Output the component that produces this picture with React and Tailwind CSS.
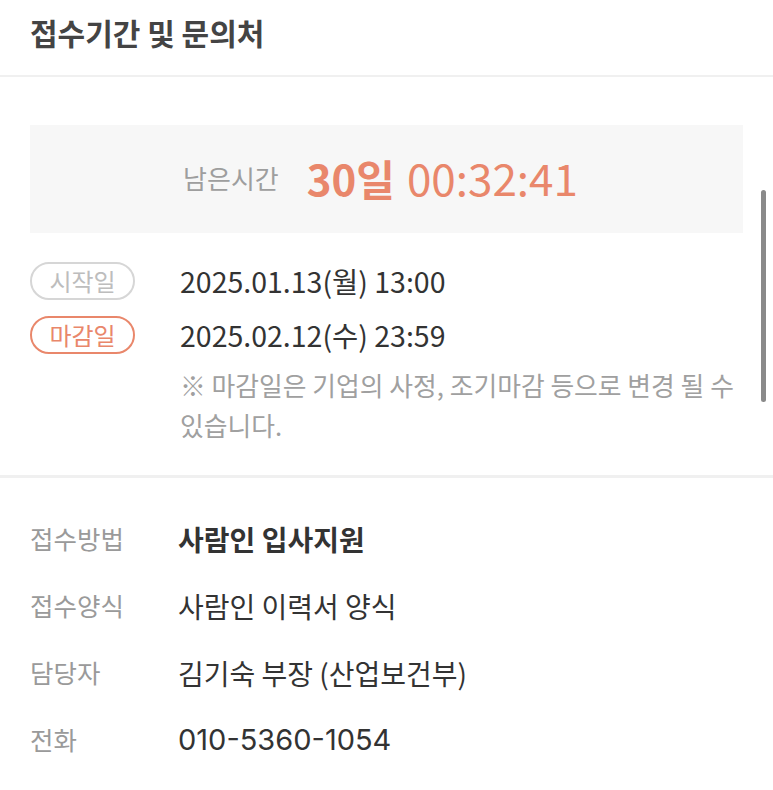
const KR = { fontFamily: '"Noto Sans CJK KR", "Noto Sans", sans-serif' }

function Pill({ children, accent }) {
  return (
    <span
      className={
        'flex h-[38px] w-[105px] shrink-0 items-center justify-center rounded-full border-2 text-[24px] leading-none ' +
        (accent ? 'border-[#e9876b] text-[#e9876b]' : 'border-[#d6d6d6] text-[#bdbdbd]')
      }
    >
      {children}
    </span>
  )
}

function InfoRow({ label, children, bold }) {
  return (
    <div className="flex h-[67px] items-center">
      <span className="w-[148px] shrink-0 text-[25.5px] text-[#9a9a9a]">{label}</span>
      <span className={'text-[28px] text-[#333] ' + (bold ? 'font-bold' : '')}>{children}</span>
    </div>
  )
}

export default function App() {
  return (
    <div className="relative h-[790px] w-[773px] overflow-hidden bg-white" style={KR}>
      <header className="h-[77px] border-b-2 border-[#f0f0f0] px-[30px] pt-[11px]">
        <h2 className="text-[30px] font-bold leading-[42px] text-[#444]">접수기간 및 문의처</h2>
      </header>

      <section className="border-b-[3px] border-[#f0f0f0] px-[30px] pb-[30px] pt-[48px]">
        <div className="flex h-[108px] items-center justify-center bg-[#f7f7f7] pb-[4px] pr-[12px]">
          <span className="mr-[28px] text-[26px] text-[#9e9e9e]">남은시간</span>
          <span className="text-[42px] font-bold text-[#e9876b]">30일</span>
          <span className="ml-[12px] text-[44px] text-[#e9876b]">00:32:41</span>
        </div>

        <div className="mt-[29px] flex flex-col gap-[16px]">
          <div className="flex h-[38px] items-center">
            <Pill>시작일</Pill>
            <span className="ml-[45px] text-[28.5px] leading-none text-[#333]">2025.01.13(월) 13:00</span>
          </div>
          <div className="flex h-[38px] items-center">
            <Pill accent>마감일</Pill>
            <span className="ml-[45px] text-[28.5px] leading-none text-[#333]">2025.02.12(수) 23:59</span>
          </div>
        </div>
        <p className="ml-[150px] mt-[11px] text-[25.8px] leading-[40px] text-[#a0a0a0]">
          ※ 마감일은 기업의 사정, 조기마감 등으로 변경 될 수 있습니다.
        </p>
      </section>

      <section className="px-[30px] pt-[27px]">
        <InfoRow label="접수방법" bold>사람인 입사지원</InfoRow>
        <InfoRow label="접수양식">사람인 이력서 양식</InfoRow>
        <InfoRow label="담당자">김기숙 부장 (산업보건부)</InfoRow>
        <InfoRow label="전화">
          <span className="text-[29px]" style={{ fontFamily: 'Inter, "Noto Sans CJK KR", sans-serif' }}>
            010-5360-1054
          </span>
        </InfoRow>
      </section>

      <div className="absolute right-[7px] top-[190px] h-[212px] w-[5px] rounded-full bg-[#8a8a8a]" />
    </div>
  )
}
